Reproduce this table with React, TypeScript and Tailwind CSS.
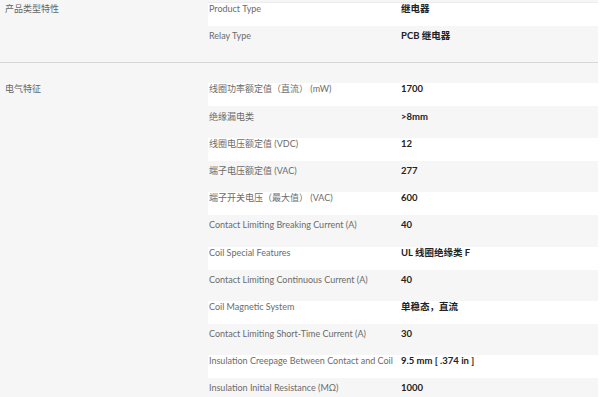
import React from 'react';

interface SpecRow {
  label: string;
  value: string;
}

interface SpecGroup {
  title: string;
  rows: SpecRow[];
}

const GROUPS: SpecGroup[] = [
  {
    title: '产品类型特性',
    rows: [
      { label: 'Product Type', value: '继电器' },
      { label: 'Relay Type', value: 'PCB 继电器' },
    ],
  },
  {
    title: '电气特征',
    rows: [
      { label: '线圈功率额定值（直流） (mW)', value: '1700' },
      { label: '绝缘漏电类', value: '>8mm' },
      { label: '线圈电压额定值 (VDC)', value: '12' },
      { label: '端子电压额定值 (VAC)', value: '277' },
      { label: '端子开关电压（最大值） (VAC)', value: '600' },
      { label: 'Contact Limiting Breaking Current (A)', value: '40' },
      { label: 'Coil Special Features', value: 'UL 线圈绝缘类 F' },
      { label: 'Contact Limiting Continuous Current (A)', value: '40' },
      { label: 'Coil Magnetic System', value: '单稳态，直流' },
      { label: 'Contact Limiting Short-Time Current (A)', value: '30' },
      { label: 'Insulation Creepage Between Contact and Coil', value: '9.5 mm [ .374 in ]' },
      { label: 'Insulation Initial Resistance (MΩ)', value: '1000' },
    ],
  },
];

const FONT = "font-['Lato','Noto_Sans_CJK_SC',sans-serif]";

export default function App() {
  return (
    <div className={`w-[600px] h-[397px] overflow-hidden bg-white ${FONT}`}>
      <div className="w-[598px] bg-[#f6f6f6]">
        {GROUPS.map((group, gi) => (
          <div
            key={gi}
            className={`flex ${gi === 0 ? 'pt-[2px] pb-[5px] border-b border-[#d6d6d6]' : 'pt-[20px]'}`}
          >
            {/* Group title */}
            <div className={`w-[208px] pl-[5px] text-[9px] leading-[11px] text-[#666] ${gi === 0 ? 'pt-[1px]' : ''}`}>
              {group.title}
            </div>

            {/* Rows */}
            <div className={`flex-1 flex flex-col ${gi === 0 ? 'border-t border-[#ececec]' : ''}`}>
              {group.rows.map((row, ri) => (
                <div key={ri} className="h-[27.2px]">
                  <div
                    className={`flex h-[23px] ${ri % 2 === 0 ? 'bg-white' : ''}`}
                  >
                    <div className="w-[193px] pl-[1px] text-[9px] leading-[11px] text-[#6b6b6b] whitespace-nowrap">
                      {row.label}
                    </div>
                    <div className="flex-1 text-[9.5px] leading-[11px] font-bold text-[#222] whitespace-nowrap">
                      {row.value}
                    </div>
                  </div>
                </div>
              ))}
            </div>
          </div>
        ))}
      </div>
    </div>
  );
}
